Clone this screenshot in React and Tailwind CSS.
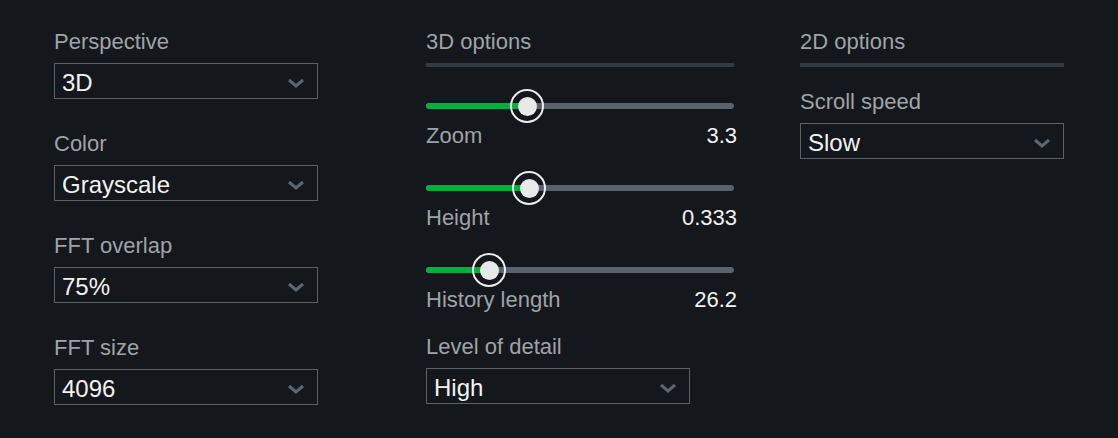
const font = { fontFamily: '"Liberation Sans", Arial, sans-serif' };

const Chevron = () => (
    <svg width="18" height="10" viewBox="0 0 18 10" className="shrink-0 mt-[4px]">
        <polyline points="2,2 9,8 16,2" fill="none" stroke="#5c6670" strokeWidth="3" />
    </svg>
);

const Label = ({ children }) => (
    <div className="h-[26px] text-[22px] leading-[26px] text-[#9fa3a7]">{children}</div>
);

const Select = ({ label, value, width = 'w-[264px]' }) => (
    <div className="flex flex-col gap-2">
        <Label>{label}</Label>
        <div className={`${width} h-[36px] border border-[#5a6067] flex items-center justify-between pl-[7px] pr-[12px]`}>
            <span className="text-[24px] text-[#f2f2f2] leading-none pt-[4px]">{value}</span>
            <Chevron />
        </div>
    </div>
);

const Header = ({ children }) => (
    <div className="flex flex-col gap-2">
        <Label>{children}</Label>
        <div className="h-[4px] bg-[#343a41]"></div>
    </div>
);

const Slider = ({ label, value, pct }) => (
    <div className="flex flex-col">
        <div className="h-[34px] flex items-center">
            <div className="relative w-[308px] h-[6px] rounded-full bg-[#59616a]">
                <div className="h-full rounded-full bg-[#00b140]" style={{ width: pct + '%' }}></div>
                <div
                    className="absolute top-1/2 -translate-x-1/2 -translate-y-1/2 w-[34px] h-[34px] rounded-full border-2 border-[#ececec] flex items-center justify-center"
                    style={{ left: pct + '%' }}
                >
                    <div className="w-[19px] h-[19px] rounded-full bg-[#e8e8e8]"></div>
                </div>
            </div>
        </div>
        <div className="flex justify-between w-[311px] h-[26px] text-[22px] leading-[26px]">
            <span className="text-[#9fa3a7]">{label}</span>
            <span className="text-[#f2f2f2]">{value}</span>
        </div>
    </div>
);

export default function App() {
    return (
        <div className="w-[1118px] h-[438px] bg-[#14171b] overflow-hidden" style={font}>
            <div className="flex pl-[54px] pt-[29px]">
                <div className="w-[264px] flex flex-col gap-[32px]">
                    <Select label="Perspective" value="3D" />
                    <Select label="Color" value="Grayscale" />
                    <Select label="FFT overlap" value="75%" />
                    <Select label="FFT size" value="4096" />
                </div>

                <div className="ml-[108px] w-[311px] flex flex-col">
                    <div className="w-[308px]">
                        <Header>3D options</Header>
                    </div>
                    <div className="mt-[22px] flex flex-col gap-[22px]">
                        <Slider label="Zoom" value="3.3" pct={32.8} />
                        <Slider label="Height" value="0.333" pct={33.5} />
                        <Slider label="History length" value="26.2" pct={20.5} />
                    </div>
                    <div className="mt-[21px]">
                        <Select label="Level of detail" value="High" />
                    </div>
                </div>

                <div className="ml-[63px] w-[264px] flex flex-col gap-[22px]">
                    <Header>2D options</Header>
                    <Select label="Scroll speed" value="Slow" />
                </div>
            </div>
        </div>
    );
}
